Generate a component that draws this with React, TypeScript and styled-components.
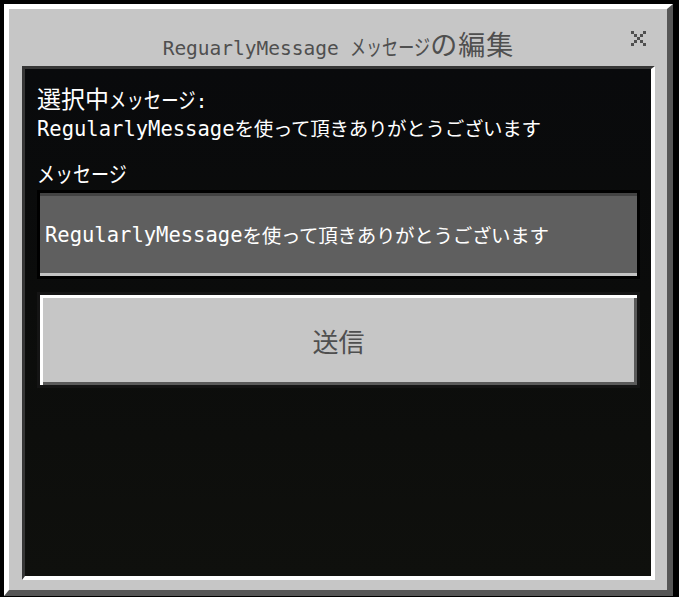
import React from "react";
import styled, { createGlobalStyle } from "styled-components";

const Global = createGlobalStyle`
  html, body {
    margin: 0;
    padding: 0;
    background: #000;
  }
  body {
    font-family: "DejaVu Sans Mono", "Noto Sans CJK JP", monospace;
  }
`;

const Screen = styled.div`
  width: 679px;
  height: 597px;
  background: #000;
  padding: 4px 0 0 4px;
  box-sizing: border-box;
  overflow: hidden;
`;

const Dialog = styled.div`
  width: 669px;
  height: 592px;
  box-sizing: border-box;
  background: #c6c6c6;
  border-top: 5px solid #ffffff;
  border-left: 5px solid #ffffff;
  border-right: 6px solid #565656;
  border-bottom: 6px solid #565656;
  padding: 0 12px 10px 13px;
  display: flex;
  flex-direction: column;
`;

const Header = styled.div`
  height: 57px;
  flex: none;
  display: grid;
  grid-template-columns: 1fr auto 1fr;
  align-items: start;
`;

const Title = styled.div`
  grid-column: 2;
  margin-top: 21px;
  line-height: 28px;
  height: 28px;
  color: #4f4f4f;
  white-space: nowrap;
  display: flex;
  align-items: baseline;
`;

const Mono = styled.span<{ $size: number }>`
  font-family: "DejaVu Sans Mono", monospace;
  font-size: ${(p) => p.$size}px;
  white-space: pre;
`;

const Jp = styled.span<{ $size: number; $track?: number }>`
  font-family: "Noto Sans CJK JP", sans-serif;
  font-size: ${(p) => p.$size}px;
  letter-spacing: ${(p) => p.$track ?? 0}px;
`;

/* narrow katakana, like the game's half-width glyphs */
const Kana = styled.span<{ $size: number; $scale: number; $chars: number }>`
  font-family: "Noto Sans CJK JP", sans-serif;
  font-size: ${(p) => p.$size}px;
  display: inline-block;
  transform: scaleX(${(p) => p.$scale});
  transform-origin: left center;
  margin-right: ${(p) => -p.$size * p.$chars * (1 - p.$scale)}px;
`;

const CloseButton = styled.button`
  grid-column: 3;
  justify-self: end;
  margin-top: 22px;
  margin-right: 9px;
  width: 15px;
  height: 15px;
  padding: 0;
  border: 0;
  background: transparent;
  display: flex;
`;

const Panel = styled.div`
  flex: 1;
  box-sizing: border-box;
  border-top: 3px solid #363636;
  border-left: 3px solid #363636;
  border-right: 4px solid #ffffff;
  border-bottom: 4px solid #ffffff;
  background: linear-gradient(180deg, #090a0c 0%, #0b0c0b 45%, #0f100d 100%);
  padding: 15px 11px 0 12px;
  display: flex;
  flex-direction: column;
`;

const Line = styled.div<{ $gap?: number }>`
  color: #ffffff;
  line-height: 28px;
  height: 28px;
  margin-top: ${(p) => p.$gap ?? 0}px;
  white-space: nowrap;
  display: flex;
  align-items: baseline;
`;

const Input = styled.div`
  margin-top: 4px;
  height: 89px;
  box-sizing: border-box;
  border: 3px solid #000000;
  background: #5f5f5f;
  box-shadow: inset 0 3px 0 #434343, inset 0 -3px 0 #c3c3c3;
  color: #ffffff;
  padding-left: 5px;
  display: flex;
  align-items: center;
  white-space: nowrap;
  line-height: 28px;
`;

const Send = styled.button`
  margin-top: 13px;
  height: 96px;
  box-sizing: border-box;
  border: 3px solid #141414;
  background: #c6c6c6;
  box-shadow: inset 3px 3px 0 #ffffff, inset -3px -3px 0 #5a5a5a;
  color: #4f4f4f;
  font-family: "Noto Sans CJK JP", sans-serif;
  font-size: 26px;
  padding: 0;
  display: flex;
  align-items: center;
  justify-content: center;
`;

const XIcon = () => (
  <svg width="15" height="15" viewBox="0 0 15 15" fill="#4f4f4f">
    <rect x="0" y="0" width="3" height="3" />
    <rect x="12" y="0" width="3" height="3" />
    <rect x="3" y="3" width="3" height="3" />
    <rect x="9" y="3" width="3" height="3" />
    <rect x="6" y="6" width="3" height="3" />
    <rect x="3" y="9" width="3" height="3" />
    <rect x="9" y="9" width="3" height="3" />
    <rect x="0" y="12" width="3" height="3" />
    <rect x="12" y="12" width="3" height="3" />
  </svg>
);

const Message = () => (
  <>
    <Mono $size={20.5}>RegularlyMessage</Mono>
    <Jp $size={19.5} $track={-0.3}>を使って頂きありがとうございます</Jp>
  </>
);

export default function App() {
  return (
    <>
      <Global />
      <Screen>
        <Dialog>
          <Header>
            <Title>
              <Mono $size={19.5}>ReguarlyMessage </Mono>
              <Kana $size={22} $scale={0.73} $chars={5}>メッセージ</Kana>
              <Jp $size={27} $track={1}>の編集</Jp>
            </Title>
            <CloseButton aria-label="閉じる">
              <XIcon />
            </CloseButton>
          </Header>
          <Panel>
            <Line>
              <Jp $size={24}>選択中</Jp>
              <Kana $size={22} $scale={0.79} $chars={5}>メッセージ</Kana>
              <Mono $size={20}>:</Mono>
            </Line>
            <Line $gap={2}>
              <Message />
            </Line>
            <Line $gap={16}>
              <Kana $size={22} $scale={0.82} $chars={5}>メッセージ</Kana>
            </Line>
            <Input>
              <Message />
            </Input>
            <Send>送信</Send>
          </Panel>
        </Dialog>
      </Screen>
    </>
  );
}
